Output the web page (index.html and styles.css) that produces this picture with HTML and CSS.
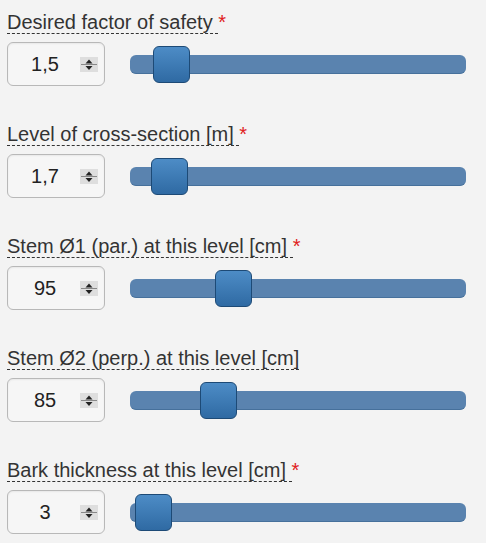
FILE: index.html
```html
<!DOCTYPE html>
<html lang="en">
<head>
<meta charset="UTF-8">
<meta name="viewport" content="width=device-width, initial-scale=1.0">
<title>Stem parameters</title>
<link rel="stylesheet" href="styles.css">
</head>
<body>

<div class="field">
  <div class="label"><span class="hint">Desired factor of safety </span><span class="req">*</span></div>
  <div class="controls">
    <div class="number">
      <span class="value">1,5</span>
      <svg class="spin" width="18" height="15" viewBox="0 0 18 15"><rect x="0" y="0" width="18" height="15" fill="#dedede"/><path d="M9 2.5 L5.5 6.5 H12.5 Z" fill="#222"/><path d="M1 7.5 H17" stroke="#888" stroke-width="1"/><path d="M5.5 9 H12.5 L9 13 Z" fill="#222"/></svg>
    </div>
    <div class="slider"><div class="thumb" style="left: 23px"></div></div>
  </div>
</div>

<div class="field">
  <div class="label"><span class="hint">Level of cross-section [m] </span><span class="req">*</span></div>
  <div class="controls">
    <div class="number">
      <span class="value">1,7</span>
      <svg class="spin" width="18" height="15" viewBox="0 0 18 15"><rect x="0" y="0" width="18" height="15" fill="#dedede"/><path d="M9 2.5 L5.5 6.5 H12.5 Z" fill="#222"/><path d="M1 7.5 H17" stroke="#888" stroke-width="1"/><path d="M5.5 9 H12.5 L9 13 Z" fill="#222"/></svg>
    </div>
    <div class="slider"><div class="thumb" style="left: 21px"></div></div>
  </div>
</div>

<div class="field">
  <div class="label"><span class="hint">Stem Ø1 (par.) at this level [cm] </span><span class="req">*</span></div>
  <div class="controls">
    <div class="number">
      <span class="value">95</span>
      <svg class="spin" width="18" height="15" viewBox="0 0 18 15"><rect x="0" y="0" width="18" height="15" fill="#dedede"/><path d="M9 2.5 L5.5 6.5 H12.5 Z" fill="#222"/><path d="M1 7.5 H17" stroke="#888" stroke-width="1"/><path d="M5.5 9 H12.5 L9 13 Z" fill="#222"/></svg>
    </div>
    <div class="slider"><div class="thumb" style="left: 85px"></div></div>
  </div>
</div>

<div class="field">
  <div class="label"><span class="hint">Stem Ø2 (perp.) at this level [cm]</span></div>
  <div class="controls">
    <div class="number">
      <span class="value">85</span>
      <svg class="spin" width="18" height="15" viewBox="0 0 18 15"><rect x="0" y="0" width="18" height="15" fill="#dedede"/><path d="M9 2.5 L5.5 6.5 H12.5 Z" fill="#222"/><path d="M1 7.5 H17" stroke="#888" stroke-width="1"/><path d="M5.5 9 H12.5 L9 13 Z" fill="#222"/></svg>
    </div>
    <div class="slider"><div class="thumb" style="left: 70px"></div></div>
  </div>
</div>

<div class="field">
  <div class="label"><span class="hint">Bark thickness at this level [cm] </span><span class="req">*</span></div>
  <div class="controls">
    <div class="number">
      <span class="value">3</span>
      <svg class="spin" width="18" height="15" viewBox="0 0 18 15"><rect x="0" y="0" width="18" height="15" fill="#dedede"/><path d="M9 2.5 L5.5 6.5 H12.5 Z" fill="#222"/><path d="M1 7.5 H17" stroke="#888" stroke-width="1"/><path d="M5.5 9 H12.5 L9 13 Z" fill="#222"/></svg>
    </div>
    <div class="slider"><div class="thumb" style="left: 5px"></div></div>
  </div>
</div>

</body>
</html>
```

FILE: styles.css
```css
html, body {
  margin: 0;
  padding: 0;
  background-color: #f3f3f3;
  font-family: "Liberation Sans", Arial, sans-serif;
  color: #333;
}
body {
  padding: 10px 20px 0 7px;
}
.field {
  margin-bottom: 36px;
}
.label {
  font-size: 20px;
  line-height: 24px;
  white-space: nowrap;
}
.hint {
  border-bottom: 1px dashed #333;
}
.req {
  color: #e02020;
}
.controls {
  display: flex;
  align-items: center;
  margin-top: 8px;
  height: 44px;
}
.number {
  box-sizing: border-box;
  width: 98px;
  height: 44px;
  display: flex;
  align-items: center;
  border: 1px solid #b8b8b8;
  border-radius: 6px;
  background-color: #f6f6f6;
  box-shadow: inset 0 1px 2px rgba(0,0,0,0.06);
}
.value {
  flex: 1;
  text-align: center;
  font-size: 20px;
  color: #222;
  padding-left: 2px;
}
.spin {
  display: block;
  margin-right: 6px;
}
.slider {
  position: relative;
  margin-left: 25px;
  width: 336px;
  height: 19px;
  border-radius: 6px;
  background-color: #5a83af;
  border-bottom: 1px solid #46709b;
  box-sizing: border-box;
}
.thumb {
  position: absolute;
  top: -9px;
  width: 37px;
  height: 37px;
  box-sizing: border-box;
  border: 1px solid #1d4a76;
  border-radius: 6px;
  background: linear-gradient(#4d8cc6, #2f6aa3);
}
```
